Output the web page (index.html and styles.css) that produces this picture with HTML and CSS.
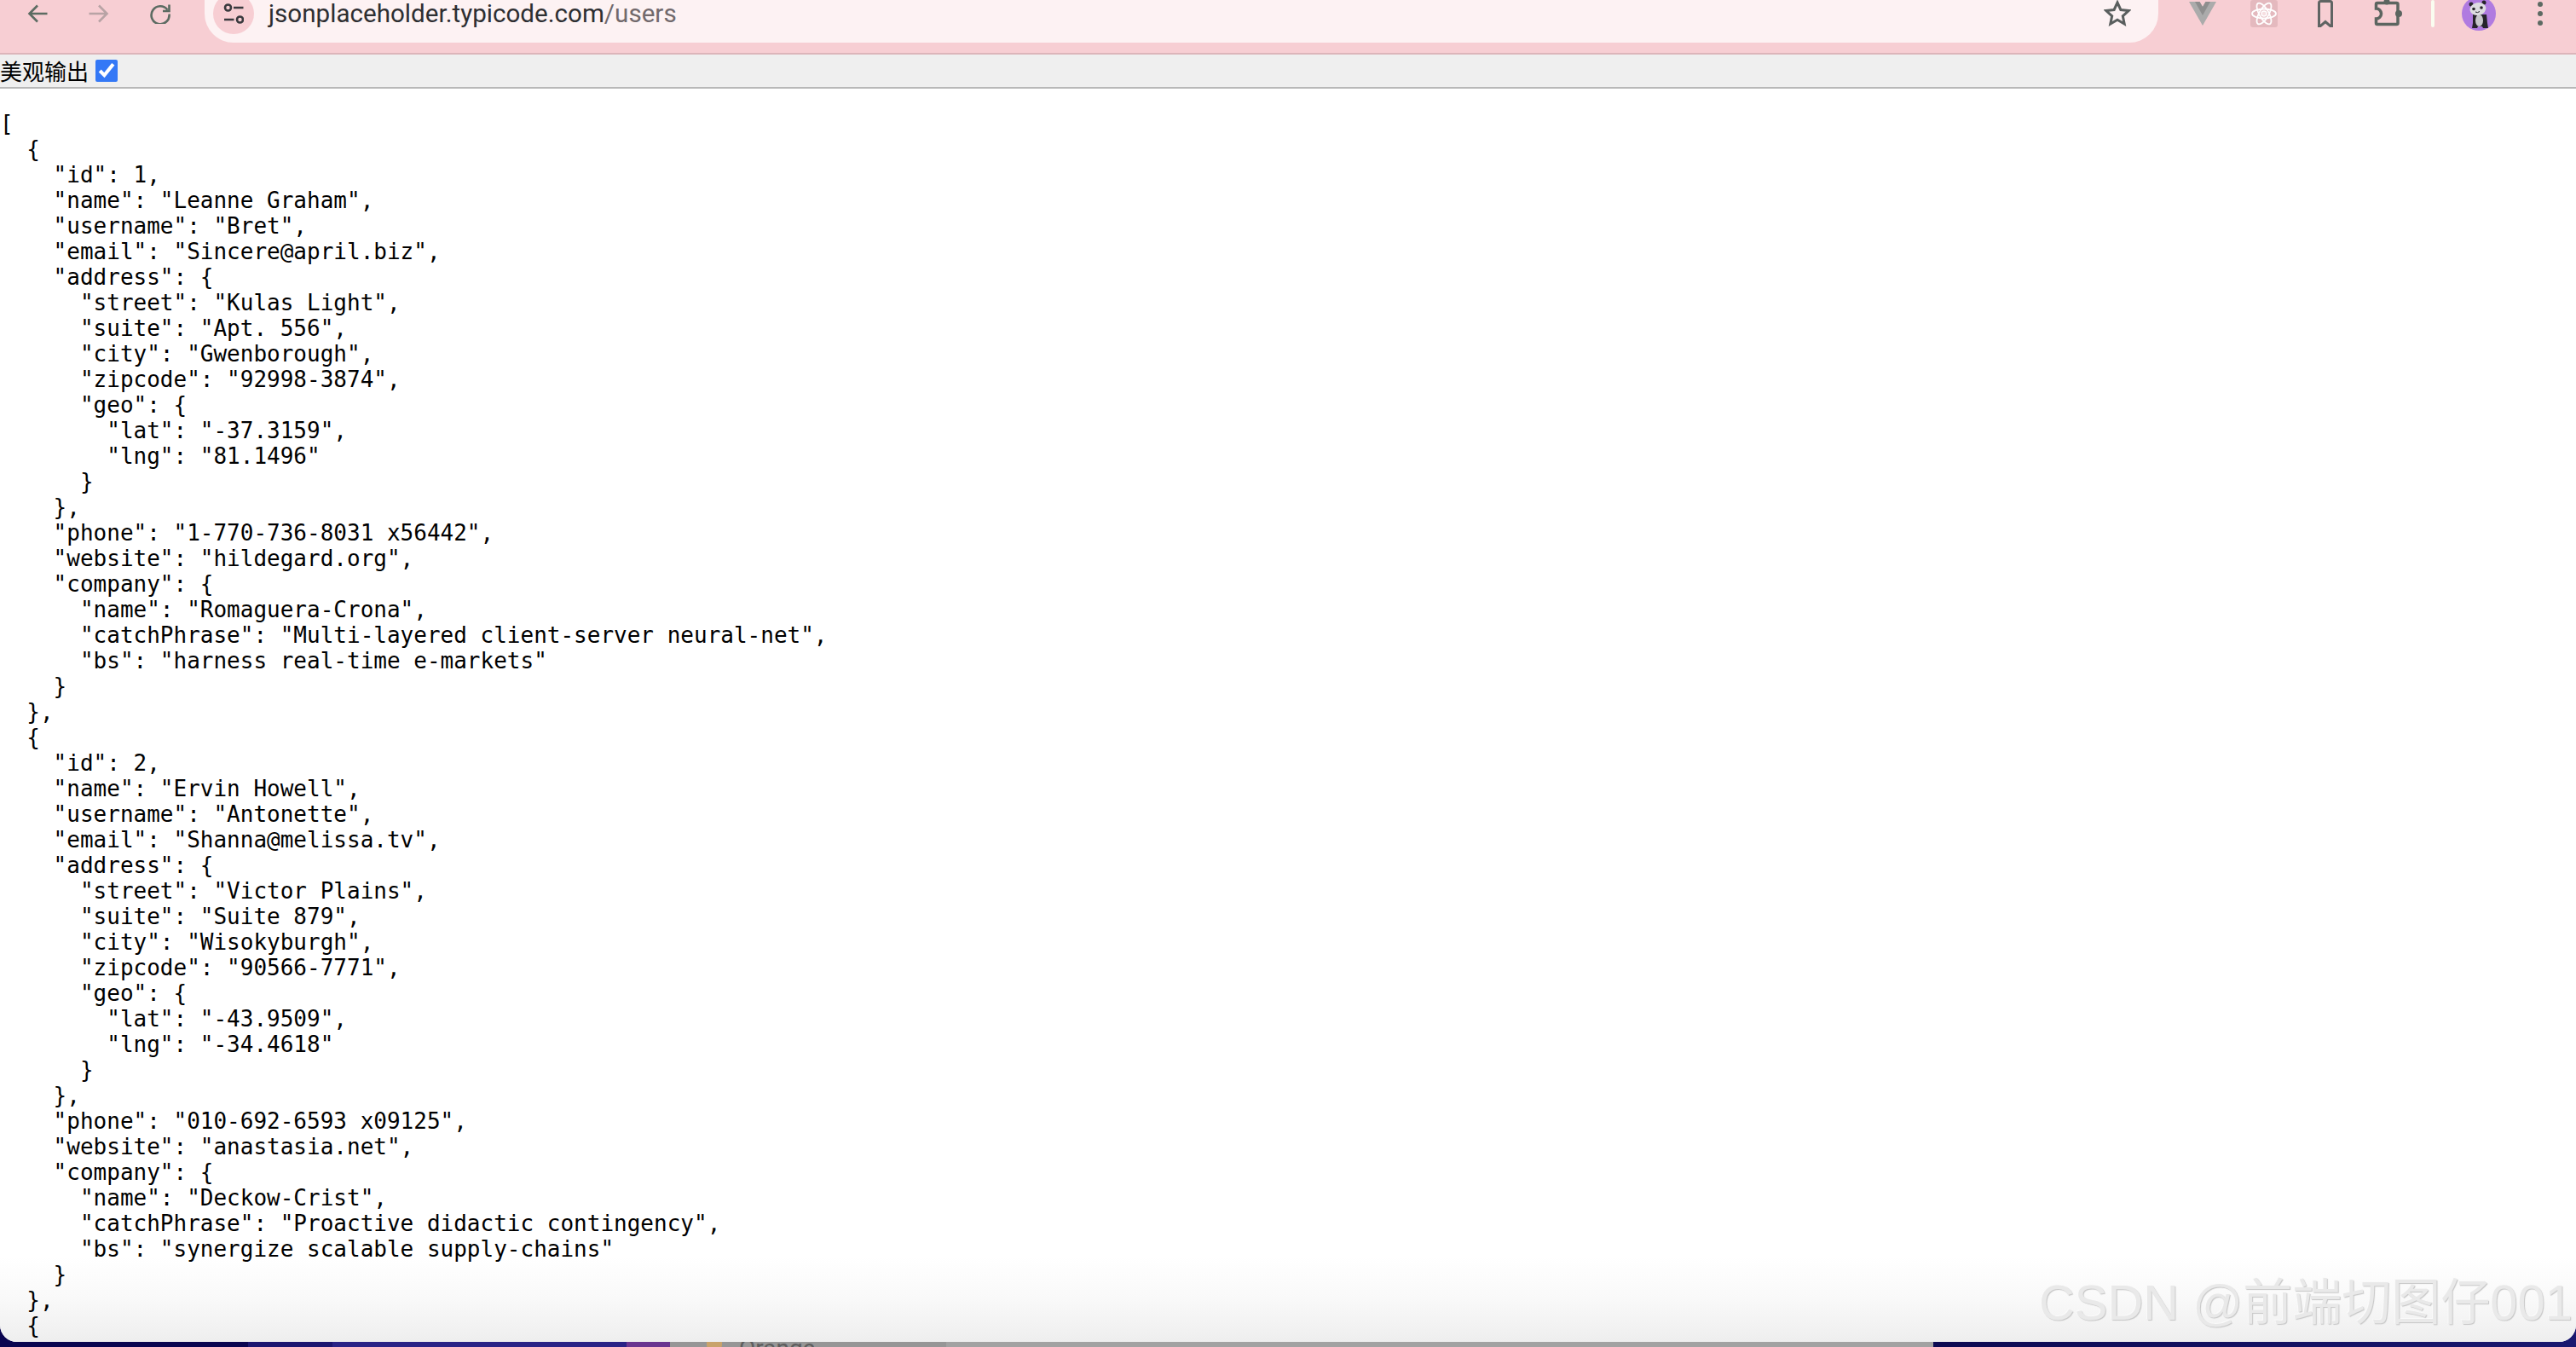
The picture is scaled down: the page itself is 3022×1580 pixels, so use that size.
FILE: index.html
```html
<!DOCTYPE html>
<html lang="zh">
<head>
<meta charset="utf-8">
<title>jsonplaceholder.typicode.com/users</title>
<link rel="stylesheet" href="styles.css">
</head>
<body>
<div class="window">
  <header class="toolbar">
    <nav class="nav">
      <svg class="nav-icon" viewBox="0 0 24 24"><path d="M23.5 12H2M12 2.5 2.5 12l9.500 9.500"/></svg>
      <svg class="nav-icon nav-icon-off" viewBox="0 0 24 24"><path d="M.5 12H22M12 2.500 21.500 12 12 21.500"/></svg>
      <svg class="nav-icon" viewBox="0 0 24 24"><path d="M20.500 7.500A10.500 10.500 0 1 0 22.500 12.500M22.500 1.500V9H15"/></svg>
    </nav>
    <div class="omnibox">
      <span class="site-btn">
        <svg class="site-icon" viewBox="0 0 24 24"><circle cx="5.500" cy="5" r="3.500"/><path d="M12 5h11.500M1 19h11.500"/><circle cx="19.500" cy="19" r="3.500"/></svg>
      </span>
      <span class="url"><span class="url-host">jsonplaceholder.typicode.com</span><span class="url-path">/users</span></span>
      <svg class="star" viewBox="0 0 32 32"><path d="M16 3l3.900 8.500 9.300 1-6.900 6.300 1.900 9.200-8.200-4.700-8.200 4.700 1.900-9.200-6.900-6.300 9.300-1z"/></svg>
    </div>
    <div class="extensions">
      <svg class="ext" viewBox="0 0 32 32"><path class="vue-outer" d="M0 2h12.500L16 8l3.500-6H32L16 30z"/><path class="vue-inner" d="M7 2h5.500L16 8l3.500-6H25L16 18z"/></svg>
      <svg class="ext ext-react" viewBox="0 0 32 32"><g class="atom"><ellipse cx="16" cy="16" rx="14" ry="5.500"/><ellipse cx="16" cy="16" rx="14" ry="5.500" transform="rotate(60 16 16)"/><ellipse cx="16" cy="16" rx="14" ry="5.500" transform="rotate(120 16 16)"/></g><circle class="atom-core" cx="16" cy="16" r="3"/></svg>
      <svg class="ext bookmark" viewBox="0 0 32 32"><path d="M8.500 32V3.500q0-2 2-2h11q2 0 2 2V32L16 25.500z"/></svg>
      <svg class="ext puzzle" viewBox="0 0 36 32"><circle class="knob" cx="16" cy="2" r="3.500"/><circle class="knob" cx="30" cy="16" r="4"/><path d="M5 3.500H27.500Q29 3.500 29 5V27Q29 28.500 27.500 28.500H5Q3.500 28.500 3.500 27V22A6 6 0 0 0 3.500 10V5Q3.500 3.500 5 3.500Z"/></svg>
    </div>
    <span class="divider"></span>
    <svg class="avatar" viewBox="0 0 40 40">
      <circle class="av-bg" cx="20" cy="20" r="20"/>
      <path class="av-dark" d="M13 21h16l1 10 1 6h-6l-1-2h-5l-1 2h-6l1-6z"/>
      <ellipse class="av-belly" cx="20.500" cy="28" rx="4.500" ry="7"/>
      <circle class="av-dark" cx="11" cy="9" r="2.500"/><circle class="av-dark" cx="26" cy="7" r="2.500"/>
      <ellipse class="av-head" cx="19" cy="14.500" rx="9.500" ry="7.500" transform="rotate(-12 19 14.500)"/>
      <circle class="av-dark" cx="14" cy="14.500" r="1.800"/><circle class="av-dark" cx="23" cy="13" r="1.800"/>
      <path class="av-mouth" d="M16 18q2.500 1.500 5-.5"/>
    </svg>
    <svg class="menu" viewBox="0 0 6 32"><circle cx="3" cy="5" r="3"/><circle cx="3" cy="16" r="3"/><circle cx="3" cy="27" r="3"/></svg>
  </header>

  <form class="infobar">
    <label class="pretty">美观输出<input class="pretty-box" type="checkbox" checked></label>
  </form>

  <pre class="json">[
  {
    "id": 1,
    "name": "Leanne Graham",
    "username": "Bret",
    "email": "Sincere@april.biz",
    "address": {
      "street": "Kulas Light",
      "suite": "Apt. 556",
      "city": "Gwenborough",
      "zipcode": "92998-3874",
      "geo": {
        "lat": "-37.3159",
        "lng": "81.1496"
      }
    },
    "phone": "1-770-736-8031 x56442",
    "website": "hildegard.org",
    "company": {
      "name": "Romaguera-Crona",
      "catchPhrase": "Multi-layered client-server neural-net",
      "bs": "harness real-time e-markets"
    }
  },
  {
    "id": 2,
    "name": "Ervin Howell",
    "username": "Antonette",
    "email": "Shanna@melissa.tv",
    "address": {
      "street": "Victor Plains",
      "suite": "Suite 879",
      "city": "Wisokyburgh",
      "zipcode": "90566-7771",
      "geo": {
        "lat": "-43.9509",
        "lng": "-34.4618"
      }
    },
    "phone": "010-692-6593 x09125",
    "website": "anastasia.net",
    "company": {
      "name": "Deckow-Crist",
      "catchPhrase": "Proactive didactic contingency",
      "bs": "synergize scalable supply-chains"
    }
  },
  {</pre>
  <div class="watermark">CSDN @前端切图仔001</div>
</div>

<footer class="desktop">
  <span class="seg seg-a"></span>
  <span class="seg seg-b"></span>
  <span class="seg seg-c"></span>
  <span class="seg seg-d"></span>
  <span class="seg seg-e"><span class="seg-dot"></span><span class="seg-label">Orange</span></span>
  <span class="seg seg-f"></span>
  <span class="seg seg-g"></span>
</footer>
</body>
</html>
```

FILE: styles.css
```css
* { box-sizing: border-box; }

html, body {
  margin: 0;
  height: 100%;
}

body {
  display: flex;
  flex-direction: column;
  height: 1580px;
  overflow: hidden;
  background: #0a0550;
}

.window {
  position: relative;
  z-index: 1;
  display: flex;
  flex-direction: column;
  flex: none;
  height: 1574px;
  overflow: hidden;
  background: #fff;
  border-radius: 0 0 20px 20px;
}

/* Browser toolbar */
.toolbar {
  display: flex;
  align-items: flex-start;
  flex: none;
  height: 64px;
  padding-left: 32px;
  background: #f7ced3;
  border-bottom: 2px solid #dcb5ba;
}

.nav {
  display: flex;
  gap: 48px;
  padding-top: 4px;
}

.nav-icon {
  width: 24px;
  height: 24px;
  fill: none;
  stroke: #5c6b62;
  stroke-width: 2.6;
}

.nav-icon-off { stroke: #b8a3a5; }

.omnibox {
  display: flex;
  align-items: flex-start;
  width: 2292px;
  height: 50px;
  margin-left: 40px;
  padding: 0 32px 0 10px;
  overflow: hidden;
  background: #fdf2f3;
  border-radius: 0 0 34px 34px;
}

.site-btn {
  display: flex;
  align-items: center;
  justify-content: center;
  flex: none;
  width: 48px;
  height: 48px;
  margin-top: -8px;
  background: #f7ced3;
  border-radius: 50%;
}

.site-icon {
  width: 24px;
  height: 24px;
  fill: none;
  stroke: #3a3a3e;
  stroke-width: 2.6;
}

.url {
  flex: 1;
  margin-left: 17px;
  font: 29.6px/32px Roboto, "Liberation Sans", sans-serif;
  white-space: nowrap;
}

.url-host { color: #2e2f32; }
.url-path { color: #71696c; }

.star {
  flex: none;
  width: 32px;
  height: 32px;
  fill: none;
  stroke: #5a5f5e;
  stroke-width: 3;
}

.extensions {
  display: flex;
  align-items: flex-start;
  gap: 40px;
  margin-left: 36px;
}

.ext {
  flex: none;
  width: 32px;
  height: 32px;
}

.vue-outer { fill: #ababab; }
.vue-inner { fill: #8e8e8e; }

.ext-react {
  background: #e4b9be;
  border-radius: 3px;
}

.atom {
  fill: none;
  stroke: #fff;
  stroke-width: 1.800;
}

.atom-core {
  fill: #f6dfe1;
  stroke: #fff;
  stroke-width: 1.500;
}

.bookmark {
  fill: none;
  stroke: #5f6463;
  stroke-width: 3;
}

.puzzle {
  width: 36px;
  fill: none;
  stroke: #5c6560;
  stroke-width: 3.500;
}

.knob {
  fill: #5c6560;
  stroke: none;
}

.divider {
  flex: none;
  width: 4px;
  height: 32px;
  margin-left: 32px;
  background: #fafdf0;
  border-radius: 2px;
}

.avatar {
  flex: none;
  width: 40px;
  height: 40px;
  margin: -4px 0 0 32px;
}

.av-bg { fill: #b07be0; }
.av-dark { fill: #26242a; }
.av-belly { fill: #c8c8cc; }
.av-head { fill: #dcdce0; }

.av-mouth {
  fill: none;
  stroke: #26242a;
  stroke-width: 1;
}

.menu {
  flex: none;
  width: 6px;
  height: 32px;
  margin-left: 49px;
  fill: #5c6a62;
}

/* Pretty-print bar */
.infobar {
  display: flex;
  flex: none;
  align-items: center;
  height: 40px;
  margin: 0;
  background: #efefef;
  border-bottom: 2px solid #b8b8b8;
}

.pretty {
  display: flex;
  align-items: center;
  gap: 8px;
  font: 26px/32px "Noto Sans CJK SC", sans-serif;
  color: #000;
}

.pretty-box {
  width: 26px;
  height: 26px;
  margin: 0;
  accent-color: #3478f6;
}

/* JSON body */
.json {
  flex: 1;
  margin: 0;
  padding-top: 26px;
  overflow: hidden;
  font: 26px/30px "DejaVu Sans Mono", monospace;
  color: #000;
  background: linear-gradient(to bottom, #fff calc(100% - 100px), #f9f9f9 calc(100% - 50px), #eeeeee 100%);
}

.watermark {
  position: absolute;
  right: 4px;
  bottom: 11px;
  font: 58px/70px "Liberation Sans", "Noto Sans CJK SC", sans-serif;
  color: #e9e9e9;
  white-space: nowrap;
  text-shadow: 1px 1px 1px #c6c6c6, -1px -1px 0 #fafafa;
}

/* Desktop peeking below the window */
.desktop {
  display: flex;
  flex: none;
  height: 26px;
  margin-top: -20px;
}

.seg {
  flex: none;
  display: flex;
  align-items: flex-start;
  padding-top: 20px;
}

.seg-a { width: 291px; background: #0a0550; }
.seg-b { width: 99px; background: #1c1670; }
.seg-c { width: 345px; background: #2a2386; }
.seg-d { width: 51px; background: #6a3590; }
.seg-e { width: 324px; background: #969696; padding-left: 43px; gap: 20px; }
.seg-f { width: 1158px; background: #a2a2a2; }
.seg-g { width: 754px; background: linear-gradient(to right, #0d0a52, #1a1870); }

.seg-dot {
  flex: none;
  width: 18px;
  height: 12px;
  background: #c9a36b;
  border-radius: 0 0 9px 9px;
}

.seg-label {
  font: 28px/30px Roboto, sans-serif;
  color: #5e5e5e;
  margin-top: -7px;
}
```
